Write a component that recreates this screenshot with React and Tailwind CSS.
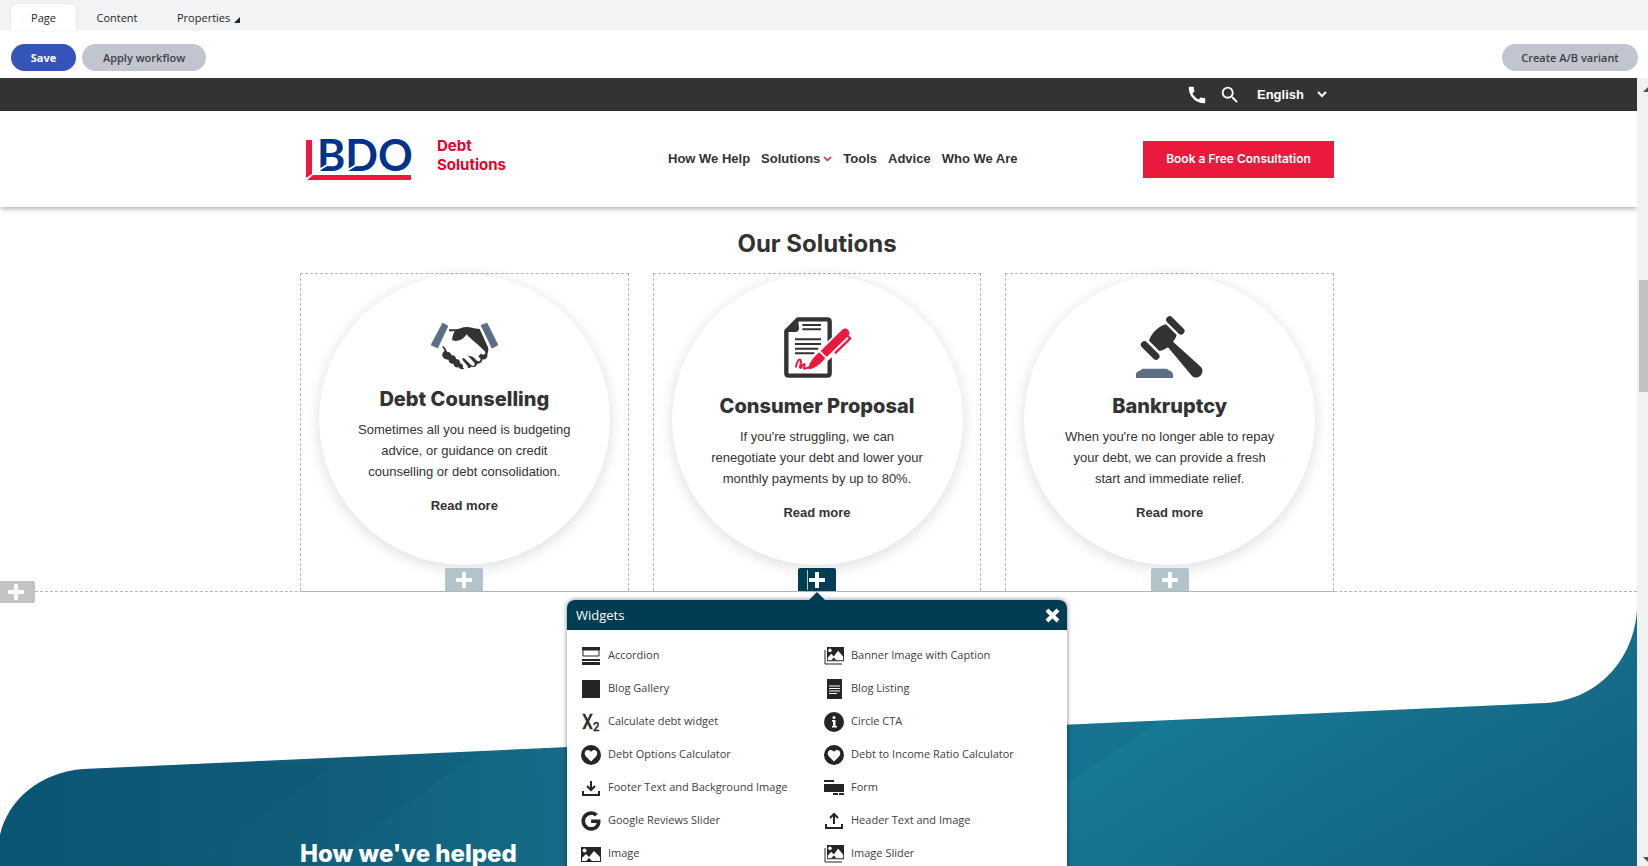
import { useState } from "react";
import { FaGoogle } from "react-icons/fa";
import { MdCall, MdSearch } from "react-icons/md";

// ==============================
// ICONS
// ==============================
const HandshakeIcon = () => (
  <svg width="67" height="48" viewBox="0 0 201 144">
    <path d="M35 0l16 9-31 66-20-9zM168 0l-18 7 33 69 18-10z" fill="#5b6e84" stroke="#5b6e84" strokeWidth="2" strokeLinejoin="round" />
    <path d="M54 19h22c12-2 18-7 30-7 12 0 22 5 40 6l25 55c3 8-1 16-2 22 2 10-7 15-14 14-2 10-9 14-16 13-3 9-11 12-18 9-6 6-13 4-18 2-7 9-16 7-20 0-8 2-15-3-16-11-9 1-15-5-14-12-9 0-17-4-19-11-2-6 2-12 7-16L33 70h8l16 14 80 20 22-21-46-40c-15 16-26 24-38 22-12-3-15-6-13-11 2-12 4-20 9-29H54z" fill="#333" />
    <path d="M62 27c-16 3-27 20-30 38 9 6 13 13 17 22 7-1 11 3 13 10 8-1 13 4 13 11 8 0 13 5 12 12 7 2 11 8 9 14l8 3c6 1 9-5 5-9l-14-16c-3-5 2-9 6-5l20 20c7 5 13-2 9-8l-23-25c-3-5 2-9 6-5l25 24c7 5 14-2 9-8l-30-30c-3-5 2-9 6-5l30 24c7 4 13-3 8-9-20-21-42-36-54-51-10 14-20 20-33 20-11 0-14-7-12-14 1-6 2-9 4-13z" fill="#fff" />
  </svg>
);

const ProposalIcon = () => (
  <svg width="67" height="61" viewBox="0 0 201 183" fill="none">
    <path d="M42 7h88q7 0 7 7v155q0 7-7 7H14q-7 0-7-7V42z" stroke="#333" strokeWidth="13" strokeLinejoin="round" />
    <path d="M42 4l3 30q0 11-11 11H4z" fill="#333" />
    <path d="M55 24h56M55 37h56M33 67h78M33 81h78M33 95h70M33 109h58" stroke="#333" strokeWidth="6" />
    <path d="M72 160l22-53 90-84 24 24-8 24-86 76z" fill="#fff" />
    <path d="M110 102l63-62c12-14 30 2 20 17l-65 63zM106 106l18 18c-14 16-32 32-51 33 1-19 16-37 33-51z" fill="#eb1a3c" />
    <path d="M155 107l44-43" stroke="#eb1a3c" strokeWidth="7" strokeLinecap="round" />
    <path d="M188 55l12 10" stroke="#eb1a3c" strokeWidth="6" />
    <path d="M36 149c2-14 9-25 14-20 4 6-6 24 0 24 3 0 5-13 11-12 4 3-5 16 2 14l12-4" stroke="#eb1a3c" strokeWidth="6" strokeLinecap="round" />
  </svg>
);

const GavelIcon = () => (
  <svg width="67" height="62" viewBox="0 0 201 186">
    <path d="M0 186v-10c0-8 8-10 14-13 3-4 6-5 12-5h60c6 0 9 1 12 5 6 3 13 5 13 13v10z" fill="#5b6e84" />
    <path d="M101 11l34 34M25 86l35 35" stroke="#333" strokeWidth="21" strokeLinecap="round" />
    <path d="M90 25l32 32c-2 8-6 14-11 20l84 76c14 18-10 42-27 27L96 94c-9 6-17 10-26 11L39 74C46 54 64 32 90 25z" fill="#333" />
  </svg>
);

const PictureShape = () => (
  <>
    <path d="M0 0h20v15H0z" fill="#262524" />
    <circle cx="3.5" cy="3.5" r="2" fill="#fff" />
    <path d="M1 14v-3l4-4 3 3 5-6 6 6v4z" fill="#fff" />
    <path d="M5 14l3-3 3 3z" fill="#262524" />
  </>
);

const ICONS = {
  accordion: (
    <svg width="20" height="20" viewBox="0 0 20 20" fill="#262524">
      <path d="M1 1h18v3H1zM1 13h18v2H1zM1 16h18v3H1z" />
      <path d="M2 4h16v6H2z" fill="none" stroke="#262524" />
    </svg>
  ),
  square: (
    <svg width="20" height="20" viewBox="0 0 20 20">
      <path d="M1 1h18v18H1z" fill="#262524" />
    </svg>
  ),
  subscript: (
    <svg width="20" height="20" viewBox="0 0 20 20" className="overflow-visible" fill="#262524" stroke="#262524" strokeWidth="0.500" fontFamily="'Roboto Condensed', 'Open Sans', sans-serif" fontWeight="400">
      <text x="1" y="17" fontSize="20">X</text>
      <text x="12" y="19" fontSize="13">2</text>
    </svg>
  ),
  heart: (
    <svg width="20" height="20" viewBox="0 0 20 20">
      <circle cx="10" cy="10" r="10" fill="#262524" />
      <path d="M10 16.500L5 11.500C2.500 8.500 4 5 7 5c1.500 0 2.500 1 3 2 .5-1 1.500-2 3-2 3 0 4.500 3.500 2 6.500z" fill="#fff" />
    </svg>
  ),
  download: (
    <svg width="20" height="20" viewBox="0 0 20 20" fill="none" stroke="#262524" strokeWidth="2">
      <path d="M2 13v4h16v-4M10 3v8M6 8l4 4 4-4" />
    </svg>
  ),
  upload: (
    <svg width="20" height="20" viewBox="0 0 20 20" fill="none" stroke="#262524" strokeWidth="2">
      <path d="M2 13v4h16v-4M10 13V4M6 7l4-4 4 4" />
    </svg>
  ),
  google: <FaGoogle size={20} color="#262524" />,
  image: (
    <svg width="20" height="20" viewBox="0 0 20 20">
      <g transform="translate(0 3)"><PictureShape /></g>
    </svg>
  ),
  images: (
    <svg width="20" height="20" viewBox="0 0 20 20">
      <path d="M1 4v14h17" fill="none" stroke="#262524" />
      <g transform="translate(3 1) scale(.85 .95)"><PictureShape /></g>
    </svg>
  ),
  document: (
    <svg width="20" height="20" viewBox="0 0 20 20">
      <path d="M3 0h15v20H3z" fill="#262524" />
      <path d="M5 7h11M5 9.500h11M5 12h11M5 14.500h8" stroke="#fff" />
    </svg>
  ),
  info: (
    <svg width="20" height="20" viewBox="0 0 20 20">
      <circle cx="10" cy="10" r="10" fill="#262524" />
      <circle cx="10" cy="5.500" r="1.500" fill="#fff" />
      <path d="M8 8h3.500v6H13v1.500H8V14h1V9.500H8z" fill="#fff" />
    </svg>
  ),
  form: (
    <svg width="20" height="20" viewBox="0 0 20 20" fill="#262524">
      <path d="M0 2h10v2H0zM0 6h20v8H0zM9 15h5v2H9zM15 15h5v2h-5z" />
    </svg>
  ),
};

const cards = [
  {
    title: "Debt Counselling",
    icon: <HandshakeIcon />,
    lines: ["Sometimes all you need is budgeting", "advice, or guidance on credit", "counselling or debt consolidation."],
  },
  {
    title: "Consumer Proposal",
    icon: <ProposalIcon />,
    lines: ["If you're struggling, we can", "renegotiate your debt and lower your", "monthly payments by up to 80%."],
  },
  {
    title: "Bankruptcy",
    icon: <GavelIcon />,
    lines: ["When you're no longer able to repay", "your debt, we can provide a fresh", "start and immediate relief."],
  },
];

const widgets = [
  ["accordion", "Accordion"],
  ["images", "Banner Image with Caption"],
  ["square", "Blog Gallery"],
  ["document", "Blog Listing"],
  ["subscript", "Calculate debt widget"],
  ["info", "Circle CTA"],
  ["heart", "Debt Options Calculator"],
  ["heart", "Debt to Income Ratio Calculator"],
  ["download", "Footer Text and Background Image"],
  ["form", "Form"],
  ["google", "Google Reviews Slider"],
  ["upload", "Header Text and Image"],
  ["image", "Image"],
  ["images", "Image Slider"],
];

const Plus = () => (
  <svg width="16" height="16" viewBox="0 0 16 16">
    <path d="M6 0h4v6h6v4h-6v6H6v-6H0V6h6z" fill="#fff" />
  </svg>
);

function Logo() {
  return (
    <a href="#" aria-label="BDO Debt Solutions" className="flex h-[47px] w-[368px] items-center pl-[6px]">
      <svg width="106" height="41" viewBox="0 0 106 41" className="overflow-visible">
        <path d="M0 1h6v34l-6 4zM7 36h98v5H1z" fill="#eb1a3c" />
        <text x="11" y="32" fontFamily="Lato, sans-serif" fontWeight="700" fontSize="43" fill="#00338d">BDO</text>
        <path d="M13 31l8-5M42 31l8-5" stroke="#fff" strokeWidth="2" />
      </svg>
      <span className="ml-[25px] self-start text-[15px] leading-[19px] font-bold text-[#e8002d]">
        Debt
        <br />
        Solutions
      </span>
    </a>
  );
}

function WidgetPanel({ onClose }) {
  return (
    <div className="absolute top-full left-1/2 z-10 mt-[9px] w-[500px] -translate-x-1/2 rounded-t-lg bg-white font-['Open_Sans',sans-serif] shadow-[0_0_5px_rgba(0,0,0,0.5)]">
      <div className="absolute -top-2 left-1/2 h-0 w-0 -translate-x-1/2 border-x-8 border-b-8 border-x-transparent border-b-[#003d52]" />
      <div className="flex h-[30px] items-center justify-between rounded-t-lg bg-[#003d52] pr-[7px] pl-[9px] text-white">
        <span className="pt-px text-[13px] font-medium">Widgets</span>
        <button type="button" aria-label="Close" onClick={onClose}>
          <svg width="15" height="15" viewBox="0 0 15 15">
            <path d="M2 2l11 11M13 2L2 13" stroke="#fff" strokeWidth="4" />
          </svg>
        </button>
      </div>
      <ul className="grid grid-cols-[243px_1fr] pt-[9px] pb-6 pl-[14px]">
        {widgets.map(([icon, name]) => (
          <li key={name}>
            <button type="button" className="flex h-[33px] w-full items-center gap-[7px] text-left text-[11px] text-[#403e3d]">
              {ICONS[icon]}
              {name}
            </button>
          </li>
        ))}
      </ul>
    </div>
  );
}

function SolutionCard({ card, open, onToggle }) {
  return (
    <div className="relative flex flex-1 flex-col items-center border border-b-0 border-dashed border-[#b4b4b4]">
      <div className="flex size-[291px] flex-col items-center justify-center rounded-full bg-white text-center shadow-[0_3px_15px_rgba(0,0,0,0.14)]">
        {card.icon}
        <h3 className="mt-[14px] text-[20px] leading-[28px] font-extrabold">{card.title}</h3>
        <p className="mt-[6px] font-['Liberation_Sans',sans-serif] text-[13px] leading-[21px]">
          {card.lines.map((line) => (
            <span key={line} className="block">{line}</span>
          ))}
        </p>
        <a href="#" className="mt-[13px] font-['Liberation_Sans',sans-serif] text-[13px] leading-[21px] font-bold">Read more</a>
      </div>
      <div className="relative mt-[3px]">
        <button
          type="button"
          aria-label="Add widget"
          onClick={onToggle}
          className={`flex h-[23px] w-[38px] items-center justify-center rounded-t-xs ${open ? "bg-[#003d52]" : "bg-[#b1c4cc]"}`}
        >
          {open && <span className="absolute left-[9px] h-5 w-px bg-[#b1c4cc]" />}
          <Plus />
        </button>
        {open && <WidgetPanel onClose={onToggle} />}
      </div>
    </div>
  );
}

export default function App() {
  const [active, setActive] = useState(1);

  return (
    <div className="flex h-screen flex-col overflow-hidden bg-white text-[#333]">
      {/* =============== TABS =============== */}
      <div className="flex h-[31px] shrink-0 items-end bg-[#f2f3f5] pl-[11px] font-['Open_Sans',sans-serif] text-[11px] text-[#262524]">
        <button type="button" className="h-[27px] w-[65px] rounded-t-md bg-white pt-0.5 shadow-[0_0_3px_rgba(0,0,0,0.08)]">Page</button>
        <button type="button" className="h-[27px] w-[82px] pt-0.5">Content</button>
        <button type="button" className="flex h-[27px] items-center gap-1 pt-0.5 pl-[19px]">
          Properties
          <svg width="6" height="6" viewBox="0 0 6 6" className="mt-0.5">
            <path d="M6 0v6H0z" fill="#262524" />
          </svg>
        </button>
      </div>

      {/* =============== TOOLBAR =============== */}
      <div className="flex h-[47px] shrink-0 items-end gap-[6px] pr-[10px] pb-[7px] pl-[11px] font-['Open_Sans',sans-serif] text-[11px] font-semibold">
        <button type="button" className="h-[27px] w-[65px] rounded-full bg-[#3454ba] pt-0.5 font-bold text-white">Save</button>
        <button type="button" className="h-[27px] w-[124px] rounded-full bg-[#c1c5cf] pt-0.5 text-[#403e3d]">Apply workflow</button>
        <button type="button" className="ml-auto h-[27px] w-[136px] rounded-full bg-[#c1c5cf] pt-0.5 text-[#403e3d]">Create A/B variant</button>
      </div>

      {/* =============== PAGE PREVIEW =============== */}
      <div className="flex min-h-0 flex-1">
        <div className="flex min-w-0 flex-1 flex-col overflow-hidden font-[Inter,sans-serif]">
          <div className="h-[33px] shrink-0 bg-[#333] pr-[3px] text-white">
            <div className="mx-auto flex h-full w-[1034px] items-center justify-end pr-[6px]">
              <a href="#" aria-label="Call"><MdCall size={22} /></a>
              <a href="#" aria-label="Search" className="ml-[11px]"><MdSearch size={22} /></a>
              <div className="relative ml-4 flex items-center pt-px">
                <select aria-label="Language" className="w-[71px] appearance-none bg-transparent font-['Liberation_Sans',sans-serif] text-[13px] font-bold">
                  <option>English</option>
                </select>
                <svg width="12" height="8" viewBox="0 0 12 8" className="pointer-events-none absolute right-0">
                  <path d="M2 1l4 4 4-4" fill="none" stroke="#fff" strokeWidth="2" />
                </svg>
              </div>
            </div>
          </div>

          <header className="relative h-[96px] shrink-0 bg-white pr-[3px] shadow-[0_2px_5px_rgba(0,0,0,0.3)]">
            <div className="mx-auto flex h-full w-[1034px] items-center">
              <Logo />
              <nav className="flex flex-1 gap-[11px] font-['Liberation_Sans',sans-serif] text-[13px] font-bold">
                <a href="#">How We Help</a>
                <a href="#" className="flex items-center gap-[3px]">
                  Solutions
                  <svg width="9" height="6" viewBox="0 0 9 6">
                    <path d="M1 1l3.500 3.500L8 1" fill="none" stroke="#eb1a3c" strokeWidth="1.500" />
                  </svg>
                </a>
                <a href="#">Tools</a>
                <a href="#">Advice</a>
                <a href="#">Who We Are</a>
              </nav>
              <button type="button" className="h-[37px] w-[191px] bg-[#eb1a3c] text-[12px] font-semibold text-white">Book a Free Consultation</button>
            </div>
          </header>

          <section className="relative shrink-0 border-b border-dashed border-[#b4b4b4] pr-[3px]">
            <h2 className="pt-[21px] pb-[13px] text-center text-[24px] leading-[32px] font-bold">Our Solutions</h2>
            <div className="mx-auto -mb-px flex w-[1034px] gap-6 border-b border-[#b4b4b4]">
              {cards.map((card, i) => (
                <SolutionCard key={card.title} card={card} open={active === i} onToggle={() => setActive(active === i ? -1 : i)} />
              ))}
            </div>
            <button type="button" aria-label="Add section" className="absolute -bottom-3 left-0 flex h-[22px] w-[35px] items-center justify-center rounded-r-xs bg-[#c3c3c5] pr-1">
              <Plus />
            </button>
          </section>

          {/* =============== BANNER =============== */}
          <section className="relative min-h-0 flex-1 pr-[3px]">
            <svg viewBox="0 0 1637 274" preserveAspectRatio="none" className="absolute inset-0 h-full w-full">
              <defs>
                <linearGradient id="sea" gradientUnits="userSpaceOnUse" x1="0" y1="300" x2="1637" y2="250">
                  <stop offset="0" stopColor="#0b5674" />
                  <stop offset="0.240" stopColor="#115f7c" />
                  <stop offset="0.350" stopColor="#146a86" />
                  <stop offset="0.650" stopColor="#187a96" />
                  <stop offset="1" stopColor="#187690" />
                </linearGradient>
                <linearGradient id="deep" gradientUnits="userSpaceOnUse" x1="1230" y1="90" x2="1390" y2="400">
                  <stop offset="0" stopColor="#0f5c7c" stopOpacity="0" />
                  <stop offset="1" stopColor="#0f5c7c" stopOpacity="0.850" />
                </linearGradient>
                <clipPath id="wave">
                  <path d="M0 243C8 208 40 180 84 177L1547 111C1600 107 1634 66 1637 18V274H0z" />
                </clipPath>
              </defs>
              <g clipPath="url(#wave)">
                <path d="M0 0h1637v274H0z" fill="url(#sea)" />
                <path d="M1067 0h570v274h-570z" fill="url(#deep)" />
                <path d="M330 175L190 274H0V150z" fill="#0b5373" opacity="0.200" />
                <path d="M480 160L320 274h250V150z" fill="#187a96" opacity="0.150" />
                <path d="M1157 130l-90 62v-70z" fill="#0f5c7c" opacity="0.200" />
              </g>
            </svg>
            <div className="relative mx-auto w-[1034px] pt-[250px]">
              <h2 className="text-[24px] leading-[24px] font-extrabold text-white">How we've helped</h2>
            </div>
          </section>
        </div>

        {/* =============== SCROLLBAR =============== */}
        <div className="flex w-[11px] shrink-0 flex-col items-end justify-between bg-[#f1f1f1]">
          <svg width="5" height="5" viewBox="0 0 5 5" className="mt-[9px]"><path d="M5 0v5H0z" fill="#505050" /></svg>
          <div className="mb-[277px] h-[112px] w-[9px] bg-[#c1c1c1]" />
          <svg width="5" height="5" viewBox="0 0 5 5" className="mb-1"><path d="M0 0h5v5z" fill="#505050" /></svg>
        </div>
      </div>
    </div>
  );
}
